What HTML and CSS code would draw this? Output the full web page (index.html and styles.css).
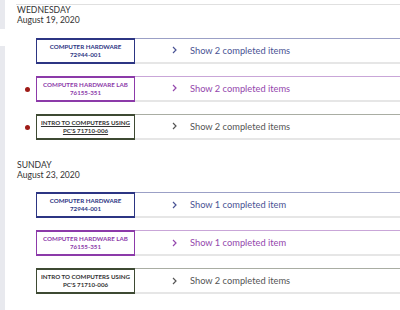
FILE: index.html
```html
<!DOCTYPE html>
<html lang="en">
<head>
  <meta charset="UTF-8">
  <title>Completed items</title>
  <link rel="stylesheet" href="styles.css">
</head>
<body>
  <div class="rail">
    <div class="rail-top"></div>
    <div class="rail-bottom"></div>
  </div>

  <div class="main">
    <div class="day first">
      <div class="day-name">WEDNESDAY</div>
      <div class="day-date">August 19, 2020</div>

      <div class="row navy">
        <span class="dot-slot"></span>
        <div class="tag">COMPUTER HARDWARE<br>72944-001</div>
        <div class="summary">
          <svg class="chev" width="5" height="8" viewBox="0 0 5 8"><polyline points="1,1 4,4 1,7" fill="none" stroke="currentColor" stroke-width="1.2"/></svg>
          <span>Show 2 completed items</span>
        </div>
      </div>

      <div class="row purple">
        <span class="dot-slot"><span class="dot"></span></span>
        <div class="tag">COMPUTER HARDWARE LAB<br>76155-351</div>
        <div class="summary">
          <svg class="chev" width="5" height="8" viewBox="0 0 5 8"><polyline points="1,1 4,4 1,7" fill="none" stroke="currentColor" stroke-width="1.2"/></svg>
          <span>Show 2 completed items</span>
        </div>
      </div>

      <div class="row green">
        <span class="dot-slot"><span class="dot"></span></span>
        <div class="tag link">INTRO TO COMPUTERS USING<br>PC'S 71710-006</div>
        <div class="summary">
          <svg class="chev" width="5" height="8" viewBox="0 0 5 8"><polyline points="1,1 4,4 1,7" fill="none" stroke="currentColor" stroke-width="1.2"/></svg>
          <span>Show 2 completed items</span>
        </div>
      </div>
    </div>

    <div class="day">
      <div class="day-name">SUNDAY</div>
      <div class="day-date">August 23, 2020</div>

      <div class="row navy">
        <span class="dot-slot"></span>
        <div class="tag">COMPUTER HARDWARE<br>72944-001</div>
        <div class="summary">
          <svg class="chev" width="5" height="8" viewBox="0 0 5 8"><polyline points="1,1 4,4 1,7" fill="none" stroke="currentColor" stroke-width="1.2"/></svg>
          <span>Show 1 completed item</span>
        </div>
      </div>

      <div class="row purple">
        <span class="dot-slot"></span>
        <div class="tag">COMPUTER HARDWARE LAB<br>76155-351</div>
        <div class="summary">
          <svg class="chev" width="5" height="8" viewBox="0 0 5 8"><polyline points="1,1 4,4 1,7" fill="none" stroke="currentColor" stroke-width="1.2"/></svg>
          <span>Show 1 completed item</span>
        </div>
      </div>

      <div class="row green">
        <span class="dot-slot"></span>
        <div class="tag">INTRO TO COMPUTERS USING<br>PC'S 71710-006</div>
        <div class="summary">
          <svg class="chev" width="5" height="8" viewBox="0 0 5 8"><polyline points="1,1 4,4 1,7" fill="none" stroke="currentColor" stroke-width="1.2"/></svg>
          <span>Show 2 completed items</span>
        </div>
      </div>
    </div>
  </div>
</body>
</html>
```

FILE: styles.css
```css
body {
  margin: 0;
  display: flex;
  min-height: 310px;
  font-family: Lato, 'Open Sans', sans-serif;
  background-color: #fff;
  color: #333;
}

.rail {
  width: 5px;
  display: flex;
  flex-direction: column;
}

.rail-top {
  height: 29px;
  background-color: #e8e9ee;
}

.rail-bottom {
  flex: 1;
  margin-top: 17px;
  background-color: #e8e9ee;
}

.main {
  flex: 1;
  padding-left: 11px;
  padding-top: 4px;
}

.day.first {
  border-top: 1px solid #e0e0e0;
}

.day-name,
.day-date {
  font-size: 8.6px;
  line-height: 10px;
  padding-left: 1px;
  color: #333;
}

.day + .day {
  margin-top: 20px;
}

.row {
  display: flex;
  height: 26px;
  margin-top: 12px;
  padding-left: 4px;
}

.day-date + .row {
  margin-top: 12.5px;
}

.dot-slot {
  width: 16px;
  display: flex;
  align-items: center;
}

.dot {
  width: 5px;
  height: 5px;
  border-radius: 50%;
  margin-left: 5px;
  margin-top: 2px;
  background-color: #9e1b17;
}

.tag {
  box-sizing: border-box;
  width: 99px;
  border: 1px solid;
  border-top-width: 2px;
  border-bottom-width: 2px;
  display: flex;
  flex-direction: column;
  justify-content: center;
  text-align: center;
  font-size: 6.2px;
  font-weight: bold;
  line-height: 7.6px;
}

.tag.link {
  text-decoration: underline;
}

.summary {
  flex: 1;
  display: flex;
  align-items: center;
  border-top: 1px solid;
  border-bottom: 2px solid #e6e6e6;
  padding-left: 37px;
  font-size: 9.3px;
}

.chev {
  margin-right: 13px;
}

.navy .tag {
  border-color: #2c3583;
  color: #2c3583;
}

.navy .summary {
  border-top-color: #9ba0c6;
  color: #4a5394;
}

.purple .tag {
  border-color: #8c3aa9;
  color: #8c3aa9;
}

.purple .summary {
  border-top-color: #c9a6d8;
  color: #9447ad;
}

.green .tag {
  border-color: #3e4a33;
  color: #333;
}

.green .summary {
  border-top-color: #a9ada3;
  color: #555;
}
```
